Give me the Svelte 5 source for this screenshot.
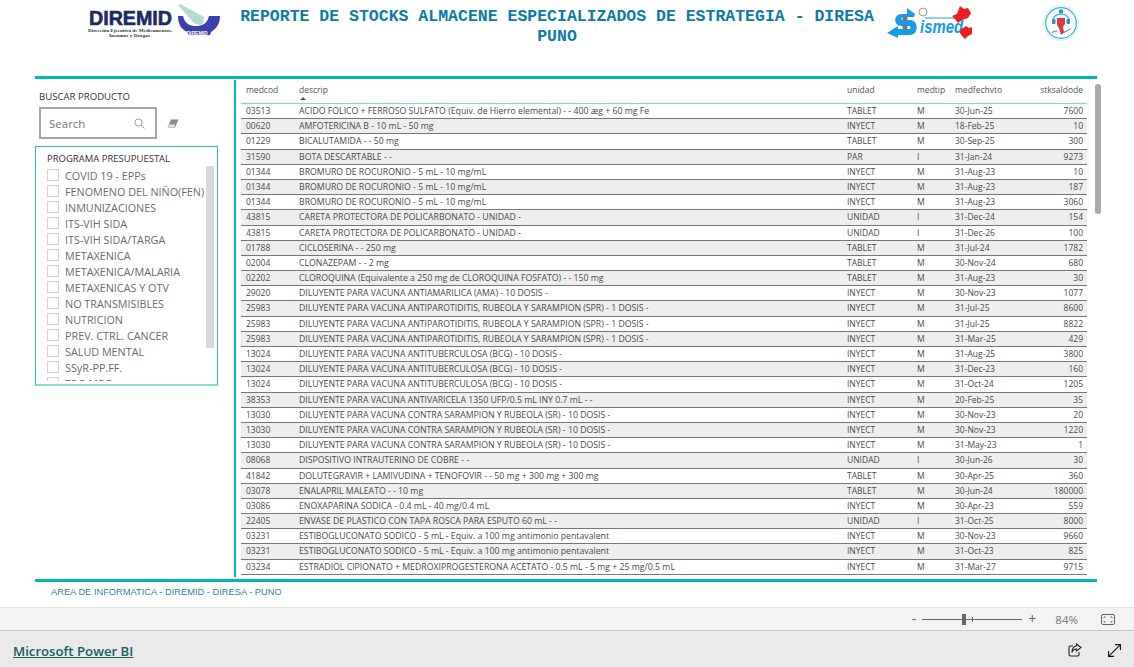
<script>
  const programas = [
    'COVID 19 - EPPs', 'FENOMENO DEL NIÑO(FEN)', 'INMUNIZACIONES', 'ITS-VIH SIDA', 'ITS-VIH SIDA/TARGA',
    'METAXENICA', 'METAXENICA/MALARIA', 'METAXENICAS Y OTV', 'NO TRANSMISIBLES', 'NUTRICION',
    'PREV. CTRL. CANCER', 'SALUD MENTAL', 'SSyR-PP.FF.', 'TBC-MDR'
  ];

  const bromuro = 'BROMURO DE ROCURONIO - 5 mL - 10 mg/mL';
  const careta = 'CARETA PROTECTORA DE POLICARBONATO - UNIDAD -';
  const spr = 'DILUYENTE PARA VACUNA ANTIPAROTIDITIS, RUBEOLA Y SARAMPION (SPR) - 1 DOSIS -';
  const bcg = 'DILUYENTE PARA VACUNA ANTITUBERCULOSA (BCG) - 10 DOSIS -';
  const sr = 'DILUYENTE PARA VACUNA CONTRA SARAMPION Y RUBEOLA (SR) - 10 DOSIS -';
  const estibo = 'ESTIBOGLUCONATO SODICO - 5 mL - Equiv. a 100 mg antimonio pentavalent';

  const filas = [
    ['03513', 'ACIDO FOLICO + FERROSO SULFATO (Equiv. de Hierro elemental) - - 400 æg + 60 mg Fe', 'TABLET', 'M', '30-Jun-25', '7600'],
    ['00620', 'AMFOTERICINA B - 10 mL - 50 mg', 'INYECT', 'M', '18-Feb-25', '10'],
    ['01229', 'BICALUTAMIDA - - 50 mg', 'TABLET', 'M', '30-Sep-25', '300'],
    ['31590', 'BOTA DESCARTABLE - -', 'PAR', 'I', '31-Jan-24', '9273'],
    ['01344', bromuro, 'INYECT', 'M', '31-Aug-23', '10'],
    ['01344', bromuro, 'INYECT', 'M', '31-Aug-23', '187'],
    ['01344', bromuro, 'INYECT', 'M', '31-Aug-23', '3060'],
    ['43815', careta, 'UNIDAD', 'I', '31-Dec-24', '154'],
    ['43815', careta, 'UNIDAD', 'I', '31-Dec-26', '100'],
    ['01788', 'CICLOSERINA - - 250 mg', 'TABLET', 'M', '31-Jul-24', '1782'],
    ['02004', 'CLONAZEPAM - - 2 mg', 'TABLET', 'M', '30-Nov-24', '680'],
    ['02202', 'CLOROQUINA (Equivalente a 250 mg de CLOROQUINA FOSFATO) - - 150 mg', 'TABLET', 'M', '31-Aug-23', '30'],
    ['29020', 'DILUYENTE PARA VACUNA ANTIAMARILICA (AMA) - 10 DOSIS -', 'INYECT', 'M', '30-Nov-23', '1077'],
    ['25983', spr, 'INYECT', 'M', '31-Jul-25', '8600'],
    ['25983', spr, 'INYECT', 'M', '31-Jul-25', '8822'],
    ['25983', spr, 'INYECT', 'M', '31-Mar-25', '429'],
    ['13024', bcg, 'INYECT', 'M', '31-Aug-25', '3800'],
    ['13024', bcg, 'INYECT', 'M', '31-Dec-23', '160'],
    ['13024', bcg, 'INYECT', 'M', '31-Oct-24', '1205'],
    ['38353', 'DILUYENTE PARA VACUNA ANTIVARICELA 1350 UFP/0.5 mL INY 0.7 mL - -', 'INYECT', 'M', '20-Feb-25', '35'],
    ['13030', sr, 'INYECT', 'M', '30-Nov-23', '20'],
    ['13030', sr, 'INYECT', 'M', '30-Nov-23', '1220'],
    ['13030', sr, 'INYECT', 'M', '31-May-23', '1'],
    ['08068', 'DISPOSITIVO INTRAUTERINO DE COBRE - -', 'UNIDAD', 'I', '30-Jun-26', '30'],
    ['41842', 'DOLUTEGRAVIR + LAMIVUDINA + TENOFOVIR - - 50 mg + 300 mg + 300 mg', 'TABLET', 'M', '30-Apr-25', '360'],
    ['03078', 'ENALAPRIL MALEATO - - 10 mg', 'TABLET', 'M', '30-Jun-24', '180000'],
    ['03086', 'ENOXAPARINA SODICA - 0.4 mL - 40 mg/0.4 mL', 'INYECT', 'M', '30-Apr-23', '559'],
    ['22405', 'ENVASE DE PLASTICO CON TAPA ROSCA PARA ESPUTO 60 mL - -', 'UNIDAD', 'I', '31-Oct-25', '8000'],
    ['03231', estibo, 'INYECT', 'M', '30-Nov-23', '9660'],
    ['03231', estibo, 'INYECT', 'M', '31-Oct-23', '825'],
    ['03234', 'ESTRADIOL CIPIONATO + MEDROXIPROGESTERONA ACETATO - 0.5 mL - 5 mg + 25 mg/0.5 mL', 'INYECT', 'M', '31-Mar-27', '9715']
  ];
</script>

<div class="page">
  <header class="top">
    <svg class="logo-diremid" width="134" height="38" viewBox="0 0 134 38">
      <text x="1" y="23" class="dir-name" textLength="83" lengthAdjust="spacingAndGlyphs">DIREMID</text>
      <text x="0" y="29.500" class="dir-sub" textLength="84" lengthAdjust="spacingAndGlyphs">Dirección Ejecutiva de Medicamentos,</text>
      <text x="21" y="35" class="dir-sub" textLength="41" lengthAdjust="spacingAndGlyphs">Insumos y Drogas</text>
      <path d="M90 14h5c2 8 7 10 13 10s11-2 13-10h11c0 8-4 13-9 16l-1 3h-22l-1-3c-6-3-9-8-9-16z" fill="#3b41ab" />
      <path d="M90 3l2-1 24 13-1 7c-3 1-6 1-9-1z" fill="#b5d9d3" />
      <text x="109" y="32.500" class="dir-mini" text-anchor="middle">DIREMID</text>
    </svg>
    <h1>REPORTE DE STOCKS ALMACENE ESPECIALIZADOS DE ESTRATEGIA - DIRESA PUNO</h1>
    <svg class="logo-sismed" width="90" height="36" viewBox="0 0 90 36">
      <path d="M1 28l11-7v3h11c2 0 2-3 0-3h-7C7 21 7 9 16 9h5V3l8 6-1 3H17c-2 0-2 3 0 3h7c9 0 9 15 0 15H12v3z" fill="#169be6" />
      <circle cx="19" cy="13" r="2.600" fill="#777" /><circle cx="19" cy="22" r="2.600" fill="#777" />
      <circle cx="37" cy="7" r="4" fill="#fff" stroke="#999" />
      <path d="M39 13h35" stroke="#17a8a0" stroke-width="1" />
      <text x="34" y="28" class="ismed" textLength="43" lengthAdjust="spacingAndGlyphs">ismed</text>
      <path d="M66 11l5-2 3-8 4 3 4-1 3 5-3 5-6 2-4 3-3-4z M74 25l6-4 3 2 3-1v7l-4 2-3 3-3-3-2-3z" fill="#ec1c24" />
    </svg>
    <svg class="logo-red" width="36" height="36" viewBox="0 0 36 36">
      <circle cx="18" cy="18" r="17.300" fill="#fff" stroke="#c4e9f6" />
      <circle cx="18" cy="18" r="15.300" fill="none" stroke="#2fb0e2" stroke-width="1.200" />
      <circle cx="18" cy="6.500" r="2.300" fill="#2198d2" />
      <path d="M10 16c0-5 4-7 8-7s8 2 8 7" fill="none" stroke="#4fb6e0" stroke-width="1.600" />
      <rect x="9" y="14" width="3.500" height="5" rx="1" fill="#2c8fc0" /><rect x="23.500" y="14" width="3.500" height="5" rx="1" fill="#2c8fc0" />
      <path d="M14 13h8v6l-2 3 1 5-3 3-2-7-2-3z" fill="#d93a44" />
      <path d="M9 28c2-3 3-1 5-2M19 29c2-3 5-2 8-5" stroke="#666" stroke-width="1" fill="none" />
    </svg>
  </header>

  <div class="rule"></div>

  <main class="body">
    <aside class="side">
      <div class="buscar-label">BUSCAR PRODUCTO</div>
      <div class="buscar-row">
        <div class="search">
          <span>Search</span>
          <svg width="11" height="11" viewBox="0 0 11 11" fill="none" stroke="#9a9a9a" stroke-width="1">
            <circle cx="4.500" cy="4.500" r="3.600" /><path d="M7.200 7.200l3.300 3.300" />
          </svg>
        </div>
        <svg class="eraser" width="12" height="9" viewBox="0 0 12 9">
          <path d="M4 .5h7.500L8 8.500H.5z" fill="#8a8a8a" /><path d="M2.300 5.500h5.800L7.500 8H1z" fill="#e4e4e4" />
        </svg>
      </div>
      <section class="slicer">
        <div class="slicer-title">PROGRAMA PRESUPUESTAL</div>
        <ul>
          {#each programas as p}
            <li><span class="check"></span>{p}</li>
          {/each}
        </ul>
        <div class="slicer-scroll"></div>
      </section>
    </aside>

    <section class="visual">
      <div class="fila head">
        <span>medcod</span>
        <span class="sorted">descrip<i></i></span>
        <span>unidad</span>
        <span>medtip</span>
        <span>medfechvto</span>
        <span class="num">stksaldode</span>
      </div>
      {#each filas as f, i}
        <div class="fila" class:alt={i % 2 === 1}>
          <span>{f[0]}</span>
          <span class="desc">{f[1]}</span>
          <span>{f[2]}</span>
          <span>{f[3]}</span>
          <span>{f[4]}</span>
          <span class="num">{f[5]}</span>
        </div>
      {/each}
      <div class="table-scroll"></div>
    </section>
  </main>

  <div class="rule"></div>
  <div class="credit">AREA DE INFORMATICA - DIREMID - DIRESA - PUNO</div>

  <div class="zoom-bar">
    <span class="zoom-btn minus">-</span>
    <div class="slider"><b></b><i></i></div>
    <span class="zoom-btn plus">+</span>
    <span class="pct">84%</span>
    <svg width="14" height="11" viewBox="0 0 14 11" fill="none" stroke="#666">
      <rect x=".5" y=".5" width="13" height="10" rx="1.500" />
      <path d="M3 4V3h1.500M11 4V3H9.500M3 7v1h1.500M11 7v1H9.500" />
    </svg>
  </div>

  <footer class="brand">
    <a href="#top">Microsoft Power BI</a>
    <div class="brand-icons">
      <svg width="14" height="14" viewBox="0 0 14 14" fill="none" stroke="#222" stroke-width="1.100">
        <path d="M5 3H2.500C1.500 3 1 3.500 1 4.500v7c0 1 .5 1.500 1.500 1.500h7c1 0 1.500-.5 1.500-1.500V9" />
        <path d="M8.500 1l4.500 3.500L8.500 8V6C6 6 4.500 7 4 9.500 3.800 6 5.500 3 8.500 3z" />
      </svg>
      <svg width="13" height="13" viewBox="0 0 13 13" fill="none" stroke="#111" stroke-width="1.100">
        <path d="M.8 12.200L12.200.8M7 .6h5.400V6M.6 7v5.400H6" />
      </svg>
    </div>
  </footer>
</div>

<style>
  :global(body) {
    margin: 0;
    background: #fff;
  }

  .page {
    width: 1134px;
    height: 667px;
    display: flex;
    flex-direction: column;
    overflow: hidden;
    font-family: "Open Sans", "Noto Sans", sans-serif;
  }

  .top {
    height: 76px;
    box-sizing: border-box;
    padding: 2px 0 0 88px;
    display: flex;
    align-items: flex-start;
  }

  .logo-diremid {
    flex: none;
  }

  h1 {
    flex: none;
    width: 640px;
    margin: 5px 0 0 15px;
    font: bold 16.5px/20px "Liberation Mono", "DejaVu Sans Mono", monospace;
    color: #0f7aa6;
    text-align: center;
  }

  .logo-sismed {
    flex: none;
    margin: 3px 0 0 9px;
  }

  .logo-red {
    flex: none;
    margin: 3px 0 0 67px;
  }

  .dir-name {
    font: bold 20px "Liberation Sans", sans-serif;
    fill: #1c2a63;
    stroke: #1c2a63;
    stroke-width: .6px;
  }

  .dir-sub {
    font: bold 5px "Liberation Serif", serif;
    fill: #333;
  }

  .dir-mini {
    font: bold 5px "Liberation Sans", sans-serif;
    fill: #fff;
  }

  .ismed {
    font: italic bold 18px "Liberation Sans", sans-serif;
    fill: #169be6;
  }

  .rule {
    flex: none;
    height: 3px;
    margin: 0 37px 0 35px;
    background: #01b8aa;
  }

  .body {
    flex: none;
    height: 500px;
    padding: 0 0 0 35px;
    display: flex;
  }

  .side {
    width: 199px;
    flex: none;
    box-sizing: border-box;
    padding-top: 11px;
  }

  .buscar-label {
    margin-left: 4px;
    font-size: 9.6px;
    line-height: 14px;
    color: #333;
  }

  .buscar-row {
    display: flex;
    align-items: center;
    gap: 10px;
    margin: 3px 0 7px 4px;
  }

  .search {
    width: 118px;
    height: 32px;
    box-sizing: border-box;
    border: 2px solid #a6a6a6;
    padding: 0 10px 0 8px;
    display: flex;
    align-items: center;
    justify-content: space-between;
    font-size: 11.5px;
    color: #777;
  }

  .eraser {
    flex: none;
  }

  .slicer {
    position: relative;
    width: 183px;
    height: 240px;
    box-sizing: border-box;
    border: 1px solid #2cbfb3;
    border-bottom: 2px solid #84ddd5;
    padding: 5px 0 0 11px;
    overflow: hidden;
  }

  .slicer-title {
    font-size: 9.500px;
    line-height: 13px;
    color: #333;
    margin-bottom: 2px;
  }

  ul {
    list-style: none;
    margin: 0;
    padding: 0;
    height: 214px;
    overflow: hidden;
  }

  li {
    height: 16px;
    display: flex;
    align-items: center;
    gap: 6px;
    font-size: 10.800px;
    color: #6b6b6b;
    white-space: nowrap;
  }

  .check {
    width: 10px;
    height: 10px;
    border: 1px solid #d6d0cc;
    flex: none;
  }

  .slicer-scroll {
    position: absolute;
    left: 170px;
    top: 19px;
    width: 8px;
    height: 182px;
    background: #d9d9d9;
  }

  .visual {
    position: relative;
    flex: none;
    width: 867px;
    box-sizing: border-box;
    border-left: 2px solid #01b8aa;
    margin-top: 1px;
    height: 497px;
    padding: 0 14px 0 5px;
  }

  .fila {
    display: grid;
    grid-template-columns: 53px 548px 70px 38px 70px 1fr;
    height: 15.200px;
    box-sizing: border-box;
    padding: 0 4px 0 5px;
    border-bottom: 1px solid #777;
    font-size: 8.500px;
    line-height: 14.200px;
    color: #4a4a4a;
    white-space: nowrap;
  }

  .fila.alt {
    background: #eeeeee;
  }

  .fila .desc {
    font-size: 8.720px;
  }

  .fila.head {
    height: 24px;
    line-height: 20px;
    border-bottom: 1px solid #7adcd3;
    color: #555;
  }

  .num {
    text-align: right;
  }

  .sorted {
    position: relative;
  }

  .sorted i {
    position: absolute;
    left: 1px;
    top: 17px;
    border-left: 3px solid transparent;
    border-right: 3px solid transparent;
    border-bottom: 3px solid #555;
  }

  .table-scroll {
    position: absolute;
    right: 0;
    top: 4px;
    width: 6px;
    height: 130px;
    border-radius: 3px;
    background: #a9a9a9;
  }

  .credit {
    flex: none;
    height: 25px;
    padding-left: 51px;
    font: 9.300px/21px "Liberation Sans", sans-serif;
    color: #2f7fab;
  }

  .zoom-bar {
    flex: none;
    height: 24px;
    box-sizing: border-box;
    background: #f3f3f3;
    border-top: 1px solid #e2e2e2;
    border-bottom: 1px solid #c8c8c8;
    display: flex;
    align-items: center;
    justify-content: flex-end;
    padding-right: 19px;
    color: #666;
  }

  .zoom-btn {
    font-size: 14px;
    line-height: 20px;
  }

  .slider {
    position: relative;
    width: 100px;
    height: 1px;
    margin: 0 6px;
    background: #666;
  }

  .slider b {
    position: absolute;
    left: 40px;
    top: -5px;
    width: 4px;
    height: 11px;
    background: #666;
  }

  .slider i {
    position: absolute;
    left: 50px;
    top: -2px;
    width: 1px;
    height: 5px;
    background: #666;
  }

  .pct {
    font-size: 11.500px;
    margin: 0 23px 0 19px;
    color: #777;
  }

  .brand {
    flex: 1;
    background: #eaeaea;
    display: flex;
    align-items: center;
    justify-content: space-between;
    padding: 2px 13px 0 13px;
  }

  .brand a {
    font-size: 13.200px;
    font-weight: 600;
    color: #17605f;
    text-decoration: underline;
    margin-top: 2px;
  }

  .brand-icons {
    display: flex;
    align-items: center;
    gap: 26px;
  }
</style>
